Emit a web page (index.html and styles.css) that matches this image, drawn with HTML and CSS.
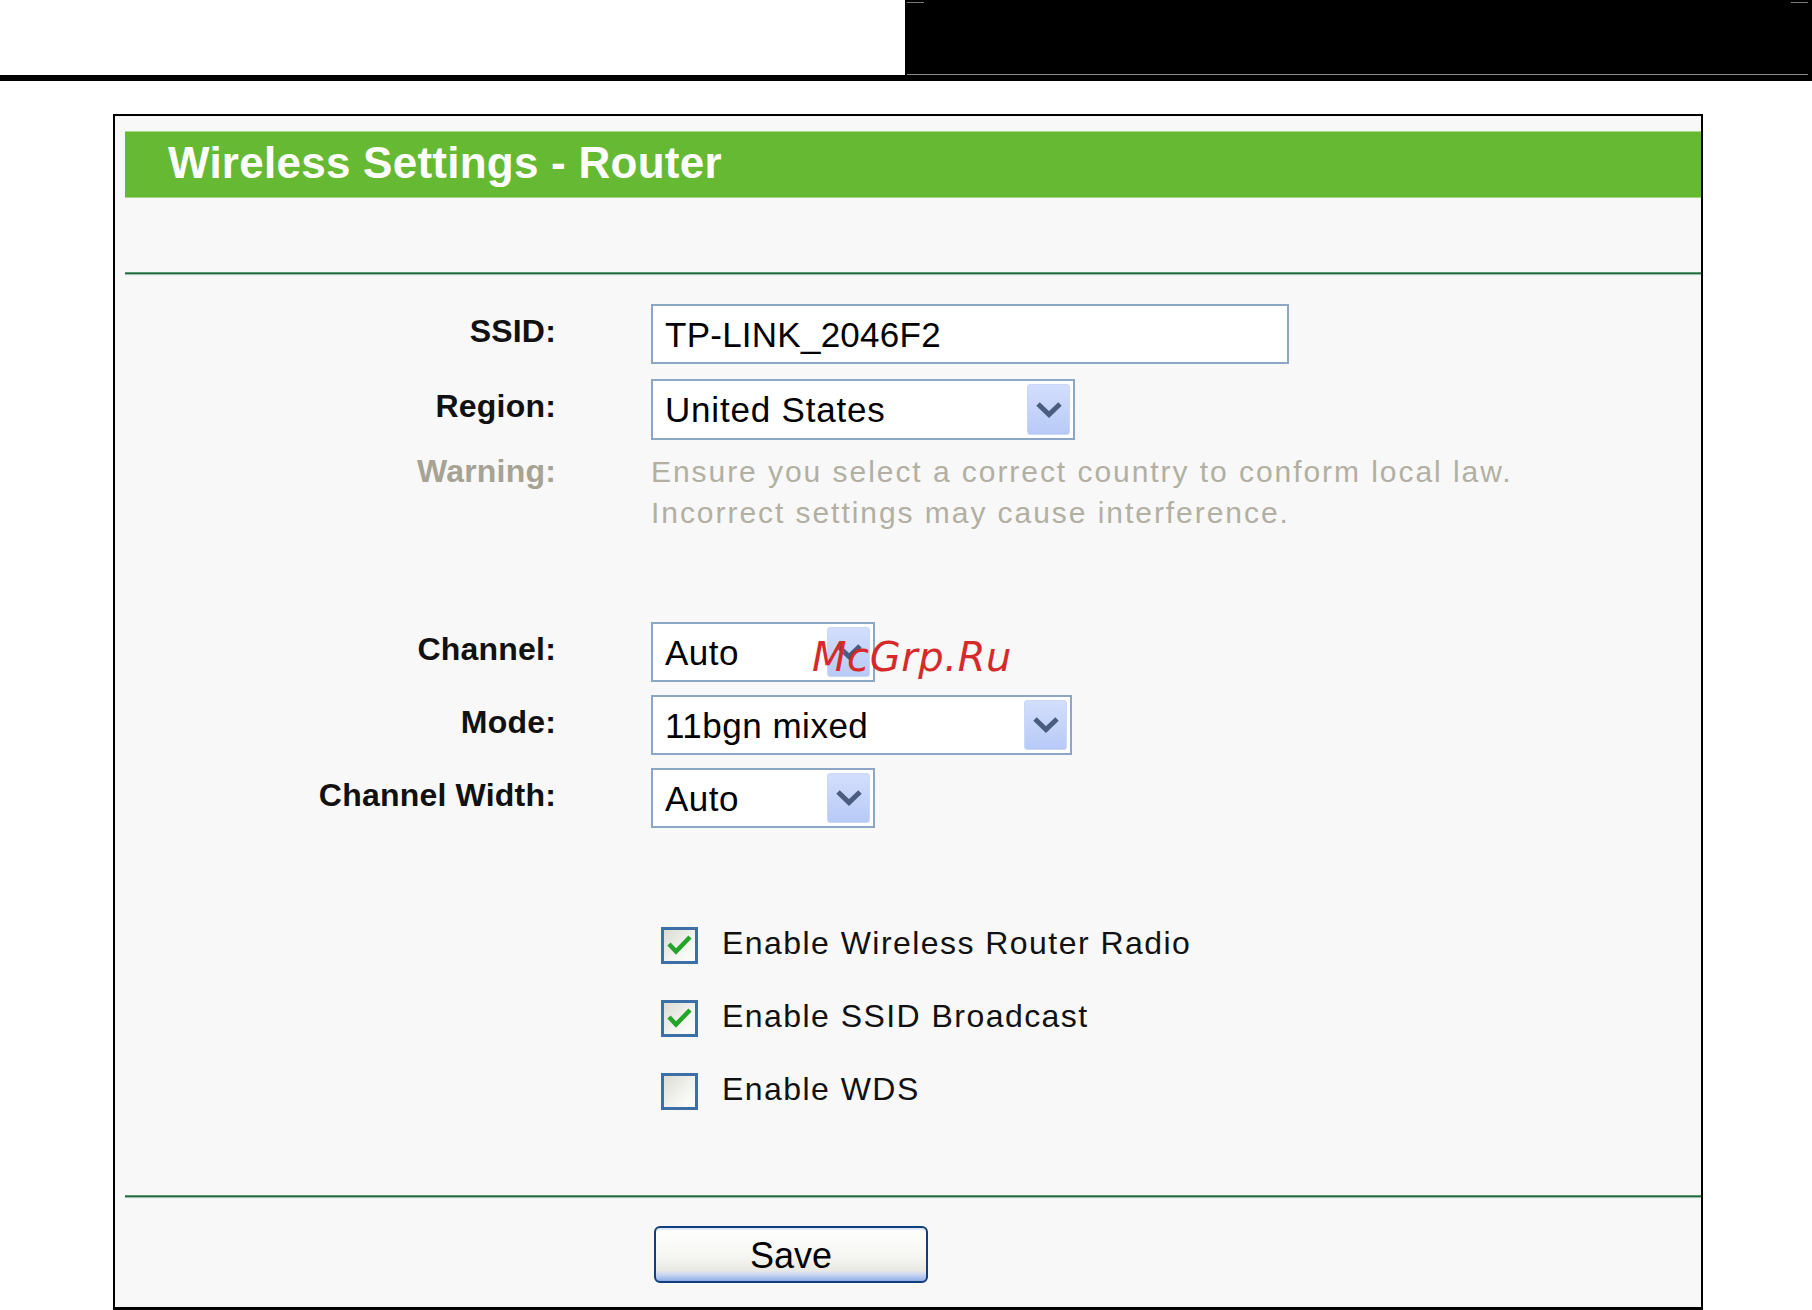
FILE: index.html
```html
<!DOCTYPE html>
<html lang="en">
<head>
<meta charset="utf-8">
<title>Wireless Settings - Router</title>
<link rel="stylesheet" href="styles.css">
</head>
<body>
<div class="topbar">
  <div class="topbar-white"></div>
  <div class="topbar-black">
    <div class="ticks"><span></span><span></span></div>
    <div class="fill"></div>
  </div>
</div>
<div class="topline"></div>

<div class="panel">
  <div class="title-bar"><h1>Wireless Settings - Router</h1></div>
  <div class="rule rule-top"></div>

  <div class="form">
    <div class="row row-ssid">
      <div class="label">SSID:</div>
      <div class="field text-field w-ssid">TP-LINK_2046F2</div>
    </div>
    <div class="row row-region">
      <div class="label">Region:</div>
      <div class="field select w-region">
        <span class="value">United States</span>
        <span class="drop"><svg width="28" height="18" viewBox="0 0 28 18"><path d="M3 3 L14 13.5 L25 3" fill="none" stroke="#4a5d80" stroke-width="5" stroke-linejoin="miter"/></svg></span>
      </div>
    </div>
    <div class="row row-warning">
      <div class="label warn-label">Warning:</div>
      <div class="warn-text">Ensure you select a correct country to conform local law.<br>Incorrect settings may cause interference.</div>
    </div>
    <div class="row row-channel">
      <div class="label">Channel:</div>
      <div class="field select w-small">
        <span class="value">Auto</span>
        <span class="drop"><svg width="28" height="18" viewBox="0 0 28 18"><path d="M3 3 L14 13.5 L25 3" fill="none" stroke="#4a5d80" stroke-width="5" stroke-linejoin="miter"/></svg></span>
      </div>
    </div>
    <div class="row row-mode">
      <div class="label">Mode:</div>
      <div class="field select w-mode">
        <span class="value">11bgn mixed</span>
        <span class="drop"><svg width="28" height="18" viewBox="0 0 28 18"><path d="M3 3 L14 13.5 L25 3" fill="none" stroke="#4a5d80" stroke-width="5" stroke-linejoin="miter"/></svg></span>
      </div>
    </div>
    <div class="row row-width">
      <div class="label">Channel Width:</div>
      <div class="field select w-small">
        <span class="value">Auto</span>
        <span class="drop"><svg width="28" height="18" viewBox="0 0 28 18"><path d="M3 3 L14 13.5 L25 3" fill="none" stroke="#4a5d80" stroke-width="5" stroke-linejoin="miter"/></svg></span>
      </div>
    </div>

    <div class="checks">
      <div class="check-row first">
        <span class="checkbox"><svg width="31" height="31" viewBox="0 0 31 31"><path d="M5 14 L12 21.5 L26 7" fill="none" stroke="#22a52a" stroke-width="4.5"/></svg></span>
        <span class="check-text">Enable Wireless Router Radio</span>
      </div>
      <div class="check-row">
        <span class="checkbox"><svg width="31" height="31" viewBox="0 0 31 31"><path d="M5 14 L12 21.5 L26 7" fill="none" stroke="#22a52a" stroke-width="4.5"/></svg></span>
        <span class="check-text">Enable SSID Broadcast</span>
      </div>
      <div class="check-row">
        <span class="checkbox"></span>
        <span class="check-text">Enable WDS</span>
      </div>
    </div>
  </div>

  <div class="rule rule-bottom"></div>
  <div class="actions"><button class="save" type="button">Save</button></div>

  <div class="watermark">McGrp.Ru</div>
</div>
</body>
</html>
```

FILE: styles.css
```css
html {
  overflow: hidden;
}

body {
  margin: 0;
  background: #ffffff;
  font-family: "Liberation Sans", Arial, sans-serif;
  color: #000;
}

/* ---------- top strip ---------- */
.topbar {
  display: flex;
  height: 75px;
}

.topbar-white {
  width: 905px;
  background: #ffffff;
}

.topbar-black {
  flex: 1;
  background: #000;
  display: flex;
  flex-direction: column;
  padding: 2px 4px 0 2px;
}

.ticks {
  display: flex;
  justify-content: space-between;
}

.ticks span {
  width: 17px;
  height: 1px;
  background: #7a7a7a;
}

.fill {
  flex: 1;
  border-bottom: 1px solid #8c8c8c;
}

.topline {
  height: 6px;
  background: #000;
}

/* ---------- panel ---------- */
.panel {
  position: relative;
  box-sizing: border-box;
  width: 1590px;
  margin: 33px 0 0 113px;
  border: 2px solid #000;
  border-bottom-width: 3px;
  background: #f8f8f8;
  padding: 15px 0 24px 10px;
}

.title-bar {
  height: 67px;
  background: #66b933;
  box-shadow: inset 0 1px 0 #a6d68a, inset 0 -1px 0 #a6d68a;
}

.title-bar h1 {
  margin: 0;
  padding: 0 0 4px 43px;
  font-size: 44px;
  line-height: 63px;
  font-weight: bold;
  color: #ffffff;
  letter-spacing: 0.25px;
}

.rule {
  height: 3px;
  background: linear-gradient(#5d9a72 0, #5d9a72 1px, #1f6139 1px, #1f6139 2px, #a3c6b0 2px, #a3c6b0 3px);
  box-shadow: 0 1px 0 #eaeef4;
}

.rule-top {
  margin-top: 74px;
}

.rule-bottom {
  margin-top: 85px;
}

/* ---------- form ---------- */
.row {
  display: flex;
  align-items: flex-start;
}

.label {
  box-sizing: border-box;
  width: 431px;
  margin-right: 95px;
  padding-top: 9px;
  text-align: right;
  font-size: 32px;
  line-height: 36px;
  font-weight: bold;
  letter-spacing: 0.2px;
  color: #111;
}

.row-ssid { margin-top: 29px; }
.row-region { margin-top: 15px; }
.row-warning { margin-top: 11px; }
.row-channel { margin-top: 89px; }
.row-mode { margin-top: 13px; }
.row-width { margin-top: 13px; }

.field {
  box-sizing: border-box;
  height: 60px;
  border: 2px solid #8ea6c6;
  background: #ffffff;
  font-size: 35px;
  letter-spacing: 0.5px;
  color: #000;
}

.row-region .field {
  height: 61px;
}

.text-field {
  padding: 9px 0 0 12px;
  line-height: 40px;
  letter-spacing: 0.25px;
}

.select {
  display: flex;
  align-items: stretch;
  padding-left: 12px;
}

.select .value {
  padding-top: 9px;
  line-height: 40px;
}

.w-region .value {
  letter-spacing: 0.8px;
}

.drop {
  margin: 3px 3px 3px auto;
  width: 43px;
  box-sizing: border-box;
  border: 1px solid #c9d7f8;
  border-radius: 3px;
  background: linear-gradient(#d3defc, #b7caf6);
  display: flex;
  align-items: center;
  justify-content: center;
}

.drop svg {
  display: block;
}

.w-ssid { width: 638px; }
.w-region { width: 424px; }
.w-mode { width: 421px; }
.w-small { width: 224px; }

.row-warning .label,
.warn-label {
  padding-top: 0;
  line-height: 41px;
  color: #a6a395;
}

.warn-text {
  font-size: 30px;
  line-height: 41px;
  letter-spacing: 1.95px;
  color: #b2afa3;
}

/* ---------- checkboxes ---------- */
.checks {
  margin-left: 536px;
}

.check-row {
  display: flex;
  align-items: center;
  margin-top: 36px;
}

.check-row.first {
  margin-top: 99px;
}

.checkbox {
  box-sizing: border-box;
  width: 37px;
  height: 37px;
  border: 3px solid #3d6ea6;
  background: linear-gradient(135deg, #dcdcd4 0%, #f2f2ee 55%, #ffffff 100%);
  margin-right: 24px;
  flex: none;
}

.checkbox svg {
  display: block;
}

.check-text {
  font-size: 32px;
  line-height: 32px;
  letter-spacing: 1.45px;
  margin-bottom: 5px;
  color: #111;
}

/* ---------- save ---------- */
.actions {
  margin-top: 28px;
  padding-left: 529px;
}

.save {
  box-sizing: border-box;
  width: 274px;
  height: 57px;
  margin: 0;
  padding: 2px 0 0;
  border: 2px solid #123f7a;
  border-radius: 6px;
  background: linear-gradient(#ffffff 0%, #f5f5f1 55%, #e9e9e4 80%, #c9d6f2 88%, #8eaee6 100%);
  box-shadow: inset 0 2px 0 #dfe8fb;
  font-family: "Liberation Sans", Arial, sans-serif;
  font-size: 36px;
  line-height: 51px;
  color: #000;
  text-align: center;
}

/* ---------- watermark overlay ---------- */
.watermark {
  position: absolute;
  left: 697px;
  top: 521px;
  font-family: "DejaVu Sans", sans-serif;
  font-style: italic;
  font-size: 40px;
  line-height: 40px;
  color: #d62a2a;
  letter-spacing: 0.6px;
}
```
